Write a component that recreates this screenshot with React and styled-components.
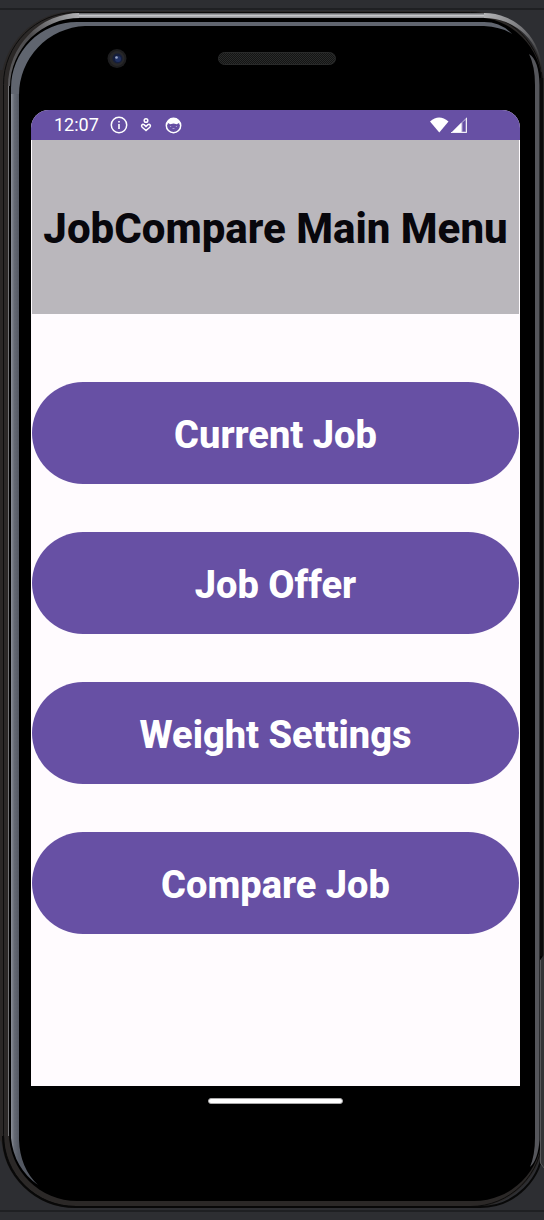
import React from "react";
import styled, { createGlobalStyle } from "styled-components";

const GlobalStyle = createGlobalStyle`
  * { box-sizing: border-box; }
  body { margin: 0; background: #2d2e32; }
`;

const Page = styled.div`
  position: relative;
  min-height: 100vh;
  overflow: hidden;
  display: flex;
  flex-direction: column;
  background: #2d2e32;
  font-family: Roboto, "Liberation Sans", sans-serif;
`;

const Art = styled.svg`
  position: absolute;
  inset: 0;
  width: 100%;
  height: 100%;
`;

const Device = styled.div`
  position: relative;
  flex: 1;
  display: flex;
  flex-direction: column;
  padding: 0 24px 0 31px;
`;

const Sensors = styled.div`
  height: 110px;
  padding: 48px 0 0 76px;
  display: flex;
  align-items: flex-start;
  gap: 91px;
`;

const Screen = styled.main`
  flex: 1;
  display: flex;
  flex-direction: column;
  background: #fffbfe;
  border-radius: 18px 18px 0 0;
  overflow: hidden;
`;

const StatusBar = styled.div`
  height: 30px;
  flex: none;
  display: flex;
  align-items: center;
  justify-content: space-between;
  padding: 0 53px 0 23px;
  background: #6750a4;
  color: #fff;
`;

const StatusGroup = styled.div`
  display: flex;
  align-items: center;
  gap: ${(p) => p.$gap}px;
`;

const Clock = styled.time`
  font-size: 18px;
  line-height: 30px;
`;

const Banner = styled.header`
  height: 174px;
  flex: none;
  margin: 0 1px;
  padding-top: 4px;
  display: flex;
  align-items: center;
  justify-content: center;
  background: #bab7bc;
`;

const Title = styled.h1`
  margin: 0;
  font-size: 42px;
  line-height: 50px;
  font-weight: 800;
  white-space: nowrap;
  color: #08070c;
`;

const Menu = styled.nav`
  display: flex;
  flex-direction: column;
  gap: 48px;
  padding: 68px 1px;
`;

const MenuButton = styled.button`
  height: 102px;
  padding: 4px 0 0;
  border: 0;
  border-radius: 51px;
  background: #6750a4;
  color: #fff;
  font-family: inherit;
  font-size: 38px;
  line-height: 44px;
  font-weight: 800;
`;

const Chin = styled.div`
  height: 134px;
  flex: none;
  display: flex;
  justify-content: center;
  padding: 12px 1px 0 0;
`;

const HomeHandle = styled.div`
  width: 135px;
  height: 6px;
  border-radius: 3px;
  border: 1px solid #a9a8a9;
  background: #fff;
`;

function PhoneBody() {
  return (
    <Art viewBox="0 0 544 1220" preserveAspectRatio="none" aria-hidden="true">
      <defs>
        <linearGradient id="silver" x1="0" x2="0" y1="0" y2="1">
          <stop offset="0" stopColor="#55565a" />
          <stop offset="0.5" stopColor="#c4c5c8" />
          <stop offset="1" stopColor="#88898d" />
        </linearGradient>
        <linearGradient id="cornerLeft" x1="0" x2="1" y1="1" y2="0">
          <stop offset="0" stopColor="#5b5a5c" />
          <stop offset="0.5" stopColor="#4b4a4c" />
          <stop offset="1" stopColor="#b4b5b8" />
        </linearGradient>
        <linearGradient id="cornerRight" x1="0" x2="1" y1="0" y2="1">
          <stop offset="0" stopColor="#b4b5b8" />
          <stop offset="0.5" stopColor="#707073" />
          <stop offset="1" stopColor="#222" />
        </linearGradient>
        <linearGradient id="rim" gradientUnits="userSpaceOnUse" x1="11" x2="19" y1="0" y2="0">
          <stop offset="0" stopColor="#8b9099" />
          <stop offset="0.4" stopColor="#656a74" />
          <stop offset="1" stopColor="#535862" />
        </linearGradient>
      </defs>
      <path d="M0 9H544M0 1211H544" stroke="#1f2023" strokeWidth="2" />
      <path d="M0 70H3V1144L0 1140Z" fill="#2b2827" />
      <rect x="1" y="11" width="543" height="1197" rx="74" fill="#2b2827" />
      <rect x="3.500" y="12.500" width="539" height="1194" rx="72" fill="none" stroke="#0c0c0c" strokeWidth="1" />
      <rect x="9" y="17" width="533" height="1184" rx="68" fill="#000" />
      <path d="M8.500 86V1136" stroke="#747476" strokeWidth="1" />
      <path d="M8 86A72 73 0 0 1 80 13V18A70 69 0 0 0 10 86Z" fill="url(#cornerLeft)" />
      <rect x="79" y="13" width="406" height="5" fill="url(#silver)" />
      <path d="M484 13A58 59 0 0 1 542 72H541A57 54 0 0 0 484 18Z" fill="url(#cornerRight)" />
      <path d="M3 1136A73 71 0 0 0 76 1207H480A63 63 0 0 0 543 1144" fill="none" stroke="#080808" strokeWidth="2" />
      <path d="M77 22A66 66 0 0 0 11 88V95H19A69 69 0 0 1 85 26H484Q502 27 512 34Q501 22 484 22Z" fill="#60656f" />
      <path d="M11 94V1138Q14 1168 38 1185Q20 1168 19 1140V94Z" fill="url(#rim)" />
      <path d="M529 54Q539 60 539.500 85V1140Q538 1160 530 1167Q535 1155 535 1138V85Q535 66 529 54Z" fill="#55565b" />
      <path d="M541.500 78V956" stroke="#0b0b0b" strokeWidth="3" />
      <path d="M543.500 78V956" stroke="#242322" strokeWidth="1" />
      <path d="M544 955L540 960V1163L544 1168Z" fill="#333335" />
      <path d="M540.500 960V1163L544 1168" fill="none" stroke="#565658" />
    </Art>
  );
}

function Camera() {
  return (
    <svg width="20" height="20" viewBox="0 0 20 20" aria-hidden="true">
      <circle cx="10" cy="10.500" r="9.500" fill="#1d1d1f" />
      <circle cx="10" cy="10.500" r="7.500" fill="#272729" />
      <circle cx="10.500" cy="10.500" r="5" fill="#151e3c" />
      <circle cx="11" cy="11" r="3" fill="#203163" />
      <circle cx="9.500" cy="9.500" r="1.300" fill="#9ca9c8" />
    </svg>
  );
}

function Speaker() {
  return (
    <svg width="118" height="22" viewBox="0 0 118 22" aria-hidden="true">
      <defs>
        <pattern id="mesh" width="2" height="2" patternUnits="userSpaceOnUse">
          <rect width="2" height="2" fill="#141414" />
          <path d="M0 0H1V1H0ZM1 1H2V2H1Z" fill="#292b2a" />
        </pattern>
      </defs>
      <rect x="0.500" y="4.500" width="117" height="12" rx="6" fill="url(#mesh)" stroke="#292a2a" />
    </svg>
  );
}

function InfoIcon() {
  return (
    <svg width="18" height="18" viewBox="0 0 18 18" fill="none" stroke="#fff" aria-hidden="true">
      <circle cx="9" cy="9" r="7.700" strokeWidth="1.500" />
      <path d="M9 8V13M9 5V6.600" strokeWidth="1.600" />
    </svg>
  );
}

function WellnessIcon() {
  return (
    <svg width="14" height="16" viewBox="-1 0 14 16" fill="none" stroke="#fff" strokeWidth="1.500" aria-hidden="true">
      <circle cx="6" cy="3.500" r="1.800" />
      <path d="M6 13.500L2.200 10.200C.6 8.600 2.300 6.700 4 7.600L6 9.400L8 7.600C9.700 6.700 11.400 8.600 9.800 10.200Z" />
    </svg>
  );
}

function FaceIcon() {
  return (
    <svg width="18" height="17" viewBox="-1 0 18 17" aria-hidden="true">
      <circle cx="8.500" cy="8.500" r="7.200" fill="none" stroke="#fff" strokeWidth="1.500" />
      <path d="M2 8Q2 1.500 8.500 1.300Q15 1.500 15 8L13.500 6L12 7.300L8.500 6.600L5 7.300L3.500 6Z" fill="#fff" />
      <path d="M5 9.500H6.200M10.800 9.500H12M7.500 11.500H9.500" stroke="#a99bcf" strokeWidth="1" />
    </svg>
  );
}

function WifiIcon() {
  return (
    <svg width="19" height="16" viewBox="0 0 19 16" aria-hidden="true">
      <path d="M0 4.500Q9 -3.500 18.500 4.500L9.300 15.500Z" fill="#fff" />
    </svg>
  );
}

function SignalIcon() {
  return (
    <svg width="16" height="16" viewBox="0 0 16 16" aria-hidden="true">
      <path d="M0 16L16 0V16Z" fill="#b3a7d1" />
      <path d="M0 16L10.500 5.500V16Z" fill="#fff" />
      <path d="M11.500 5.500L14.500 3V14.500H11.500Z" fill="#6750a4" />
      <path d="M0 15.500H15.500V1" fill="none" stroke="#efedf5" />
    </svg>
  );
}

const destinations = ["Current Job", "Job Offer", "Weight Settings", "Compare Job"];

export default function App() {
  return (
    <>
      <GlobalStyle />
      <Page>
        <PhoneBody />
        <Device>
          <Sensors>
            <Camera />
            <Speaker />
          </Sensors>
          <Screen>
            <StatusBar>
              <StatusGroup $gap={11}>
                <Clock>12:07</Clock>
                <InfoIcon />
                <WellnessIcon />
                <FaceIcon />
              </StatusGroup>
              <StatusGroup $gap={2}>
                <WifiIcon />
                <SignalIcon />
              </StatusGroup>
            </StatusBar>
            <Banner>
              <Title>JobCompare Main Menu</Title>
            </Banner>
            <Menu aria-label="Main menu">
              {destinations.map((name) => (
                <MenuButton key={name} type="button">{name}</MenuButton>
              ))}
            </Menu>
          </Screen>
          <Chin>
            <HomeHandle />
          </Chin>
        </Device>
      </Page>
    </>
  );
}
